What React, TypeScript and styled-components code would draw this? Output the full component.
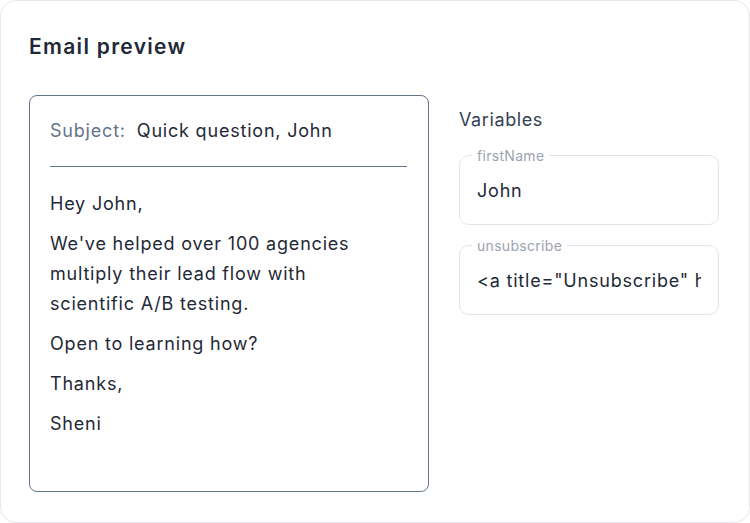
import React from "react";
import styled, { createGlobalStyle } from "styled-components";

const Global = createGlobalStyle`
  html, body { margin: 0; padding: 0; background: #ffffff; }
  body { font-family: Inter, "Noto Sans", sans-serif; }
  * { box-sizing: border-box; }
`;

const Modal = styled.div`
  width: 750px;
  height: 523px;
  background: #ffffff;
  border: 1px solid #e5e7eb;
  border-radius: 16px;
  padding: 30px 28px 0 28px;
  display: flex;
  flex-direction: column;
`;

const Title = styled.h2`
  margin: 0;
  font-size: 21px;
  font-weight: 600;
  letter-spacing: 1.3px;
  color: #1f2937;
  line-height: 32px;
`;

const Body = styled.div`
  display: flex;
  gap: 30px;
  margin-top: 32px;
`;

const Preview = styled.div`
  width: 400px;
  height: 397px;
  border: 1px solid #64748b;
  border-radius: 8px;
  padding: 20px 21px 20px 20px;
  display: flex;
  flex-direction: column;
  font-size: 18px;
  letter-spacing: 0.8px;
`;

const SubjectRow = styled.div`
  line-height: 30px;
  color: #1f2937;
  padding-bottom: 20px;
  border-bottom: 1px solid #64748b;
  margin-bottom: 22px;
`;

const SubjectLabel = styled.span`
  color: #64748b;
  margin-right: 11px;
`;

const Para = styled.p`
  margin: 0 0 10px 0;
  line-height: 30px;
  color: #1f2937;
  max-width: 326px;
`;

const Side = styled.div`
  display: flex;
  flex-direction: column;
  width: 260px;
  padding-top: 10px;
`;

const SideTitle = styled.div`
  font-size: 18px;
  letter-spacing: 0.6px;
  line-height: 30px;
  color: #334155;
  margin-bottom: 12px;
`;

const Field = styled.fieldset`
  margin: 0 0 12px 0;
  padding: 14px 17px 0 17px;
  height: 78px;
  border: 1px solid #e2e4e9;
  border-radius: 10px;
  min-width: 0;
`;

const Legend = styled.legend`
  font-size: 14px;
  letter-spacing: 0.3px;
  color: #9ca3af;
  padding: 0 5px;
  margin-left: -5px;
  line-height: 17px;
`;

const Value = styled.div`
  font-size: 18px;
  letter-spacing: 0.8px;
  line-height: 26px;
  color: #1f2937;
  white-space: nowrap;
  overflow: hidden;
  width: 100%;
`;

export default function App() {
  return (
    <>
      <Global />
      <Modal>
        <Title>Email preview</Title>
        <Body>
          <Preview>
            <SubjectRow>
              <SubjectLabel>Subject:</SubjectLabel>Quick question, John
            </SubjectRow>
            <Para>Hey John,</Para>
            <Para>
              We've helped over 100 agencies multiply their lead flow with
              scientific A/B testing.
            </Para>
            <Para>Open to learning how?</Para>
            <Para>Thanks,</Para>
            <Para>Sheni</Para>
          </Preview>
          <Side>
            <SideTitle>Variables</SideTitle>
            <Field>
              <Legend>firstName</Legend>
              <Value>John</Value>
            </Field>
            <Field>
              <Legend>unsubscribe</Legend>
              <Value>&lt;a title="Unsubscribe" href="#"&gt;Unsubscribe&lt;/a&gt;</Value>
            </Field>
          </Side>
        </Body>
      </Modal>
    </>
  );
}
